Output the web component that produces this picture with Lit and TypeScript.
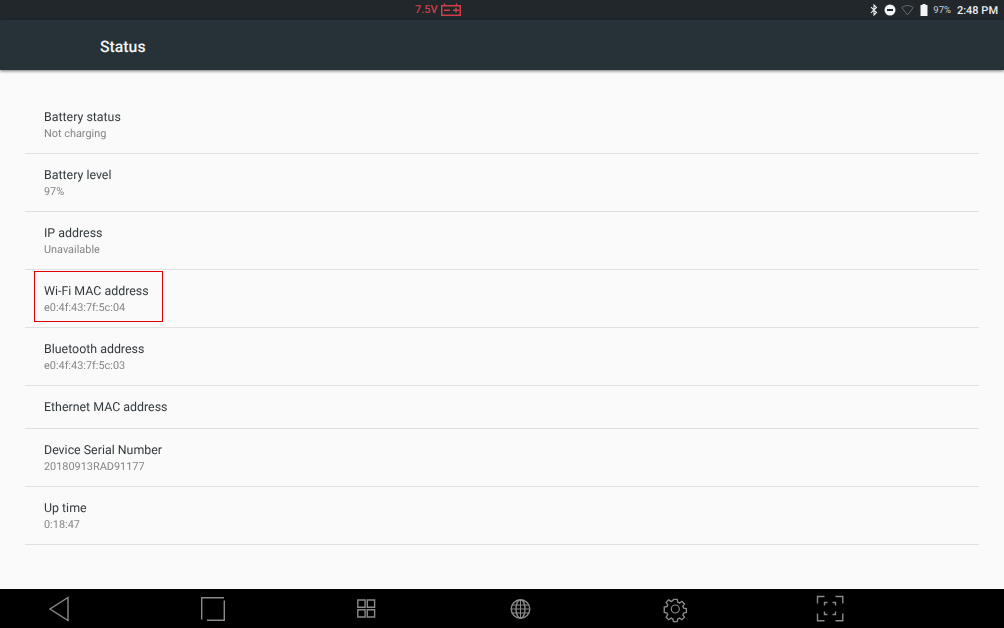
import { LitElement, html, css, svg } from "lit";
import { customElement } from "lit/decorators.js";

const rows: { t: string; s?: string; mark?: boolean }[] = [
  { t: "Battery status", s: "Not charging" },
  { t: "Battery level", s: "97%" },
  { t: "IP address", s: "Unavailable" },
  { t: "Wi-Fi MAC address", s: "e0:4f:43:7f:5c:04", mark: true },
  { t: "Bluetooth address", s: "e0:4f:43:7f:5c:03" },
  { t: "Ethernet MAC address" },
  { t: "Device Serial Number", s: "20180913RAD91177" },
  { t: "Up time", s: "0:18:47" },
];

@customElement("app-root")
export class AppRoot extends LitElement {
  static styles = css`
    :host { display: block; width: 1004px; height: 628px; font-family: Roboto, "Liberation Sans", sans-serif; background: #fafafa; text-rendering: geometricPrecision; }
    .page { display: flex; flex-direction: column; height: 628px; overflow: hidden; }
    .status { height: 20px; flex: none; background: #21272b; position: relative; display: flex; align-items: center; justify-content: flex-end; padding-right: 6px; box-sizing: border-box; color: #eceff1; }
    .center { position: absolute; left: 415px; top: 0; height: 18px; display: flex; align-items: center; gap: 3px; color: #cf3f49; font-size: 11px; font-weight: 500; }
    .icons { display: flex; align-items: center; }
    .pct { font-size: 9.5px; margin-left: 5px; color: #cfd3d5; }
    .time { font-size: 11px; font-weight: 500; margin-left: 6px; }
    .bar { height: 50px; flex: none; background: #263238; box-shadow: 0 1px 3px rgba(0,0,0,.55); position: relative; z-index: 1; display: flex; align-items: center; padding: 2px 0 0 100px; box-sizing: border-box; color: #f3f5f6; font-size: 15.8px; font-weight: 500; }
    .list { flex: 1; padding: 26px 25px 0; box-sizing: border-box; background: #fafafa; }
    .row { position: relative; border-bottom: 1px solid #e0e0e0; padding: 14px 19px 0; box-sizing: border-box; height: 58px; }
    .row.single { height: 43px; padding-top: 14px; }
    .t { font-size: 12.4px; line-height: 16px; color: #333a3e; filter: blur(0.25px); }
    .s { font-size: 10.9px; line-height: 13px; margin-top: 1px; color: #858585; filter: blur(0.25px); }
    .mark { position: absolute; left: 9px; top: 1px; width: 129px; height: 51px; border: 1px solid #e00000; box-sizing: border-box; }
    .nav { height: 39px; flex: none; background: #000; display: flex; align-items: center; padding-left: 46.500px; gap: 130.3px; box-sizing: border-box; }
    .nav svg { flex: none; width: 24px; height: 24px; fill: none; stroke: #8a8a8a; stroke-width: 1.4; overflow: visible; }
  `;

  render() {
    return html`<div class="page">
      <div class="status">
        <div class="center"><span>7.5V</span>
          <svg width="20" height="13" viewBox="0 0 20 13" fill="none" stroke="#cf3f49" stroke-width="1.500">
            <rect x="0.750" y="2.750" width="18.500" height="9.500"/><path d="M3.500 0.500v2M15.500 0.500v2M3 7.200h6M12 7.200h6M15 4.800v4.800"/>
          </svg>
        </div>
        <div class="icons">
          <svg width="10" height="12" viewBox="0 0 10 12" fill="none" stroke="#eceff1" stroke-width="1.1"><path d="M2 3.200l5.500 5.300L5 11V1l2.500 2.500L2 8.800"/></svg>
          <svg style="margin-left:5px" width="12" height="12" viewBox="0 0 12 12"><circle cx="6" cy="6" r="5.500" fill="#f2f4f5"/><rect x="3" y="5" width="6" height="2" fill="#21272b"/></svg>
          <svg style="margin-left:5px" width="13" height="11" viewBox="0 0 13 11" fill="none" stroke="#666c70" stroke-width="1"><path d="M.8 2.600C4.300-.1 8.700-.1 12.200 2.600L6.500 10z"/></svg>
          <svg style="margin-left:6px" width="8" height="12" viewBox="0 0 8 12"><path d="M2.500 0h3v1H7.500v11H.5V1h2z" fill="#f2f4f5"/></svg>
          <span class="pct">97%</span>
          <span class="time">2:48 PM</span>
        </div>
      </div>
      <div class="bar">Status</div>
      <div class="list">
        ${rows.map(
          (r) => html`<div class="row ${r.s ? "" : "single"}">
            <div class="t">${r.t}</div>
            ${r.s ? html`<div class="s">${r.s}</div>` : ""}
            ${r.mark ? html`<div class="mark"></div>` : ""}
          </div>`
        )}
      </div>
      <div class="nav">
        <svg viewBox="0 0 24 24">${svg`<path d="M21 .5v23L3 12z"/>`}</svg>
        <svg viewBox="0 0 24 24">${svg`<path d="M.7 22.500V.7H23M23.300 3.500V23.300H6"/>`}</svg>
        <svg viewBox="0 0 24 24">${svg`<path d="M2.800 3h7.300v7.300H2.800zM12.300 3h7.300v7.300H12.300zM2.800 12.700h7.300v7.300H2.800zM12.300 12.700h7.300v7.300H12.300z"/>`}</svg>
        <svg viewBox="0 0 24 24">${svg`<g transform="translate(-.5 0)"><circle cx="12" cy="12" r="9.300"/><ellipse cx="12" cy="12" rx="4.500" ry="9.300"/><path d="M12 2.700v18.600M3.700 8h16.600M3.700 16h16.600M2.700 12h18.600" stroke-width="1"/></g>`}</svg>
        <svg viewBox="0 0 24 24">${svg`<g transform="translate(1.100 1.800) scale(.85)"><circle cx="12" cy="12" r="4.700"/><path d="M9.800.7h4.400l.7 3.300 2 .9 2.900-1.900 3 3-1.900 2.900.9 2 3.200.7v4.400l-3.200.7-.9 2 1.900 2.900-3 3-2.900-1.900-2 .9-.7 3.300H9.800l-.7-3.300-2-.9-2.900 1.900-3-3 1.900-2.900-.9-2-3.200-.7V9.800l3.200-.7.9-2-1.900-2.900 3-3 2.900 1.900 2-.9z" stroke-width="1.600"/></g>`}</svg>
        <svg viewBox="0 0 24 24">${svg`<path d="M-.500 6.500V-.500H6.500M17.500 -.500H24.800V6.500M24.800 16.500V23.800H17.500M6.500 23.800H-.500V16.500M9.500 5.500H6.500V8.500M14.500 5.500H17.500V8.500M17.500 14.500V17.500H14.500M9.500 17.500H6.500V14.500"/>`}</svg>
      </div>
    </div>`;
  }
}
